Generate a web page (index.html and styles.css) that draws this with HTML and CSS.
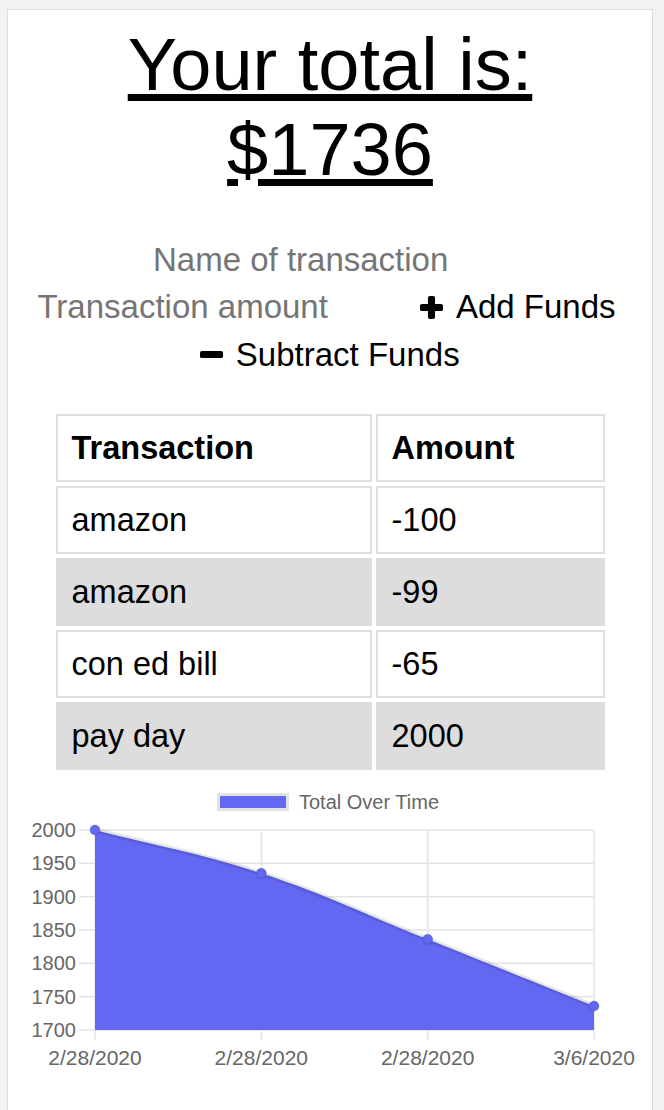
FILE: index.html
```html
<!DOCTYPE html>
<html lang="en">
<head>
<meta charset="utf-8">
<title>Budget Tracker</title>
<link rel="stylesheet" href="styles.css">
</head>
<body>
<main class="card">
  <h1 class="total">
    <span class="total__line">Your total is:</span>
    <span class="total__line">$1736</span>
  </h1>

  <form class="tx-form">
    <div class="tx-form__row">
      <input class="tx-form__input" type="text" placeholder="Name of transaction">
    </div>
    <div class="tx-form__row tx-form__row--split">
      <input class="tx-form__input" type="number" placeholder="Transaction amount">
      <button class="tx-btn tx-btn--add" type="button">
        <svg class="tx-btn__icon" viewBox="0 0 24 24" aria-hidden="true"><rect x="8.3" y="0" width="7.4" height="24" rx="2"/><rect x="0" y="8.3" width="24" height="7.4" rx="2"/></svg>
        <span>Add Funds</span>
      </button>
    </div>
    <div class="tx-form__row">
      <button class="tx-btn" type="button">
        <svg class="tx-btn__icon" viewBox="0 0 24 24" aria-hidden="true"><rect x="0" y="8.3" width="24" height="7.4" rx="2"/></svg>
        <span>Subtract Funds</span>
      </button>
    </div>
  </form>

  <table class="tx-table">
    <thead>
      <tr><th>Transaction</th><th>Amount</th></tr>
    </thead>
    <tbody>
      <tr><td>amazon</td><td>-100</td></tr>
      <tr><td>amazon</td><td>-99</td></tr>
      <tr><td>con ed bill</td><td>-65</td></tr>
      <tr><td>pay day</td><td>2000</td></tr>
    </tbody>
  </table>

  <div class="chart">
    <svg class="chart__svg" viewBox="8 776 644 310" width="644" height="310" aria-label="Total Over Time chart">
      <g class="chart__legend">
        <rect x="218.5" y="794.5" width="69" height="15" fill="#6268f2" stroke="#e2e2e2" stroke-width="3"/>
        <text x="299" y="809">Total Over Time</text>
      </g>
      <g class="chart__grid">
        <line x1="79" y1="830" x2="594" y2="830"/>
        <line x1="79" y1="863.33" x2="594" y2="863.33"/>
        <line x1="79" y1="896.67" x2="594" y2="896.67"/>
        <line x1="79" y1="930" x2="594" y2="930"/>
        <line x1="79" y1="963.33" x2="594" y2="963.33"/>
        <line x1="79" y1="996.67" x2="594" y2="996.67"/>
        <line x1="79" y1="1030" x2="594" y2="1030"/>
        <line x1="95" y1="830" x2="95" y2="1040"/>
        <line x1="261.33" y1="830" x2="261.33" y2="1040"/>
        <line x1="427.67" y1="830" x2="427.67" y2="1040"/>
        <line x1="594" y1="830" x2="594" y2="1040"/>
      </g>
      <g class="chart__ylabels">
        <text x="76" y="837">2000</text>
        <text x="76" y="870.33">1950</text>
        <text x="76" y="903.67">1900</text>
        <text x="76" y="937">1850</text>
        <text x="76" y="970.33">1800</text>
        <text x="76" y="1003.67">1750</text>
        <text x="76" y="1037">1700</text>
      </g>
      <g class="chart__xlabels">
        <text x="95" y="1065">2/28/2020</text>
        <text x="261.33" y="1065">2/28/2020</text>
        <text x="427.67" y="1065">2/28/2020</text>
        <text x="594" y="1065">3/6/2020</text>
      </g>
      <path class="chart__area" d="M95,830 C161.5,847.3 196,851.9 261.33,873.33 C328.7,895.6 361,912.9 427.67,939.33 C494,965.9 527.3,979.3 594,1006 L594,1030 L95,1030 Z"/>
      <path class="chart__line" d="M95,830 C161.5,847.3 196,851.9 261.33,873.33 C328.7,895.6 361,912.9 427.67,939.33 C494,965.9 527.3,979.3 594,1006"/>
      <g class="chart__points">
        <circle cx="95" cy="830" r="5"/>
        <circle cx="261.33" cy="873.33" r="5"/>
        <circle cx="427.67" cy="939.33" r="5"/>
        <circle cx="594" cy="1006" r="5"/>
      </g>
    </svg>
  </div>
</main>
</body>
</html>
```

FILE: styles.css
```css
* {
  box-sizing: border-box;
}

html,
body {
  margin: 0;
  padding: 0;
}

body {
  background: #f2f2f2;
  font-family: "Liberation Sans", Arial, sans-serif;
  color: #000;
}

.card {
  margin: 9px 11px 0 7px;
  min-height: 1120px;
  background: #fff;
  border: 1px solid #dcdcdc;
  border-bottom: 0;
}

.total {
  margin: 12px 0 0;
  font-size: 74px;
  font-weight: normal;
  line-height: normal;
  text-align: center;
}

.total__line {
  display: block;
  text-decoration: underline;
}

.tx-form {
  margin-top: 48.5px;
  display: flex;
  flex-direction: column;
  gap: 9.5px;
}

.tx-form__row {
  display: flex;
  justify-content: center;
  align-items: center;
}

.tx-form__row--split {
  gap: 29px;
  padding-right: 7px;
}

.tx-form__input {
  width: 354px;
  margin: 0;
  padding: 0;
  border: 0;
  outline: none;
  background: transparent;
  font-family: "Liberation Sans", Arial, sans-serif;
  font-size: 33px;
  line-height: normal;
  color: #000;
  -moz-appearance: textfield;
}

.tx-form__input::-webkit-outer-spin-button,
.tx-form__input::-webkit-inner-spin-button {
  -webkit-appearance: none;
  margin: 0;
}

.tx-form__input::placeholder {
  color: #757575;
}

.tx-btn {
  display: inline-flex;
  align-items: center;
  gap: 12.5px;
  margin: 0;
  padding: 0;
  border: 0;
  background: transparent;
  font-family: "Liberation Sans", Arial, sans-serif;
  font-size: 33px;
  line-height: normal;
  color: #000;
  cursor: pointer;
}

.tx-btn__icon {
  width: 23px;
  height: 23px;
  fill: #000;
  flex: none;
}

.tx-table {
  margin: 36.5px auto 0;
  width: 557px;
  border-collapse: separate;
  border-spacing: 4px;
  font-size: 32.5px;
  line-height: 38px;
  text-align: left;
}

.tx-table th,
.tx-table td {
  padding: 13px 14px;
  border: 2px solid #e0e0e0;
}

.tx-table th {
  font-weight: bold;
}

.tx-table th:first-child,
.tx-table td:first-child {
  width: 316px;
}

.tx-table tbody tr:nth-child(even) td {
  background: #dddddd;
  border-color: #dddddd;
}

.chart {
  margin-top: 2px;
}

.chart__svg {
  display: block;
  font-family: "Liberation Sans", Arial, sans-serif;
}

.chart__legend text {
  font-size: 20px;
  fill: #666;
}

.chart__grid line {
  stroke: #e4e4e4;
  stroke-width: 1.5;
}

.chart__ylabels text {
  font-size: 20px;
  fill: #666;
  text-anchor: end;
}

.chart__xlabels text {
  font-size: 21px;
  fill: #666;
  text-anchor: middle;
}

.chart__area {
  fill: #6268f2;
}

.chart__line {
  fill: none;
  stroke: rgba(0, 0, 0, 0.1);
  stroke-width: 5;
}

.chart__points circle {
  fill: #6268f2;
  stroke: rgba(0, 0, 0, 0.1);
  stroke-width: 1.5;
}
```
